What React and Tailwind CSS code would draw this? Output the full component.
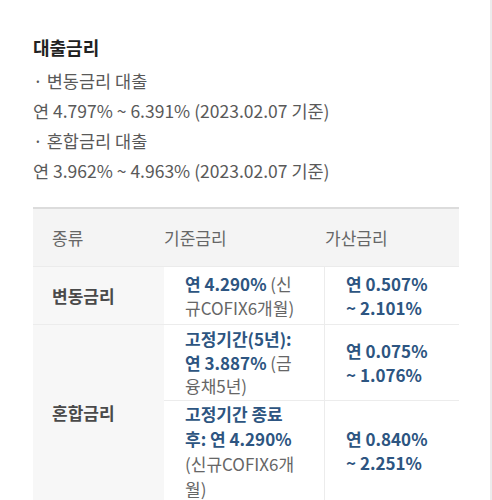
const font = { fontFamily: '"Noto Sans CJK KR", "Noto Sans", sans-serif' };

const Blue = ({ children }) => <span className="font-semibold text-[#2d5581]">{children}</span>;

const App = () => {
  return (
    <div className="relative w-[492px] h-[500px] overflow-hidden bg-white" style={font}>
      <div className="absolute right-0 top-0 h-full w-[2px] bg-[#ececec]" />
      <div className="pl-[33px] pt-[33px]">
        <h2 className="text-[18px] font-bold leading-[28px] text-[#222]">대출금리</h2>
        <div className="mt-[5px] text-[17.5px] leading-[30px] text-[#595959]">
          <p>· 변동금리 대출</p>
          <p>연 4.797% ~ 6.391% (2023.02.07 기준)</p>
          <p>· 혼합금리 대출</p>
          <p>연 3.962% ~ 4.963% (2023.02.07 기준)</p>
        </div>

        <div className="mt-[21px] w-[426px] border-t-2 border-[#dcdcdc] grid grid-cols-[131px_160px_135px] text-[17px]">
          {/* header */}
          <div className="col-span-3 grid grid-cols-[131px_160px_135px] h-[58px] items-center bg-[#f4f4f4] text-[#666] border-b border-[#ebebeb]">
            <div className="pl-[19px]">종류</div>
            <div>기준금리</div>
            <div className="pl-px">가산금리</div>
          </div>

          {/* 변동금리 */}
          <div className="h-[58px] flex items-center pl-[19px] bg-[#f7f7f7] font-semibold text-[#4a4a4a] border-b border-[#ececec]">변동금리</div>
          <div className="h-[58px] flex items-center pl-[21px] pr-[18px] leading-[24px] text-[#666] border-b border-[#ececec]">
            <p><Blue>연 4.290%</Blue> (신규COFIX6개월)</p>
          </div>
          <div className="h-[58px] flex items-center pl-[21px] pr-[10px] leading-[24px] border-l border-b border-[#ececec]">
            <p><Blue>연 0.507%<br />~ 2.101%</Blue></p>
          </div>

          {/* 혼합금리 */}
          <div className="row-span-2 flex items-center pl-[19px] bg-[#f7f7f7] font-semibold text-[#4a4a4a]">혼합금리</div>
          <div className="h-[76px] flex items-center pl-[21px] pr-[18px] leading-[23.5px] text-[#666] border-b border-[#ececec]">
            <p><Blue>고정기간(5년): 연 3.887%</Blue> (금융채5년)</p>
          </div>
          <div className="h-[76px] flex items-center pl-[21px] pr-[10px] leading-[24px] border-l border-b border-[#ececec]">
            <p><Blue>연 0.075%<br />~ 1.076%</Blue></p>
          </div>
          <div className="h-[100px] flex items-start pl-[21px] pr-[18px] leading-[25px] text-[#666]">
            <p><Blue>고정기간 종료 후: 연 4.290%</Blue> (신규COFIX6개월)</p>
          </div>
          <div className="h-[100px] flex items-center pl-[21px] pr-[10px] leading-[24px] border-l border-[#ececec]">
            <p><Blue>연 0.840%<br />~ 2.251%</Blue></p>
          </div>
        </div>
      </div>
    </div>
  );
};

export default App;
